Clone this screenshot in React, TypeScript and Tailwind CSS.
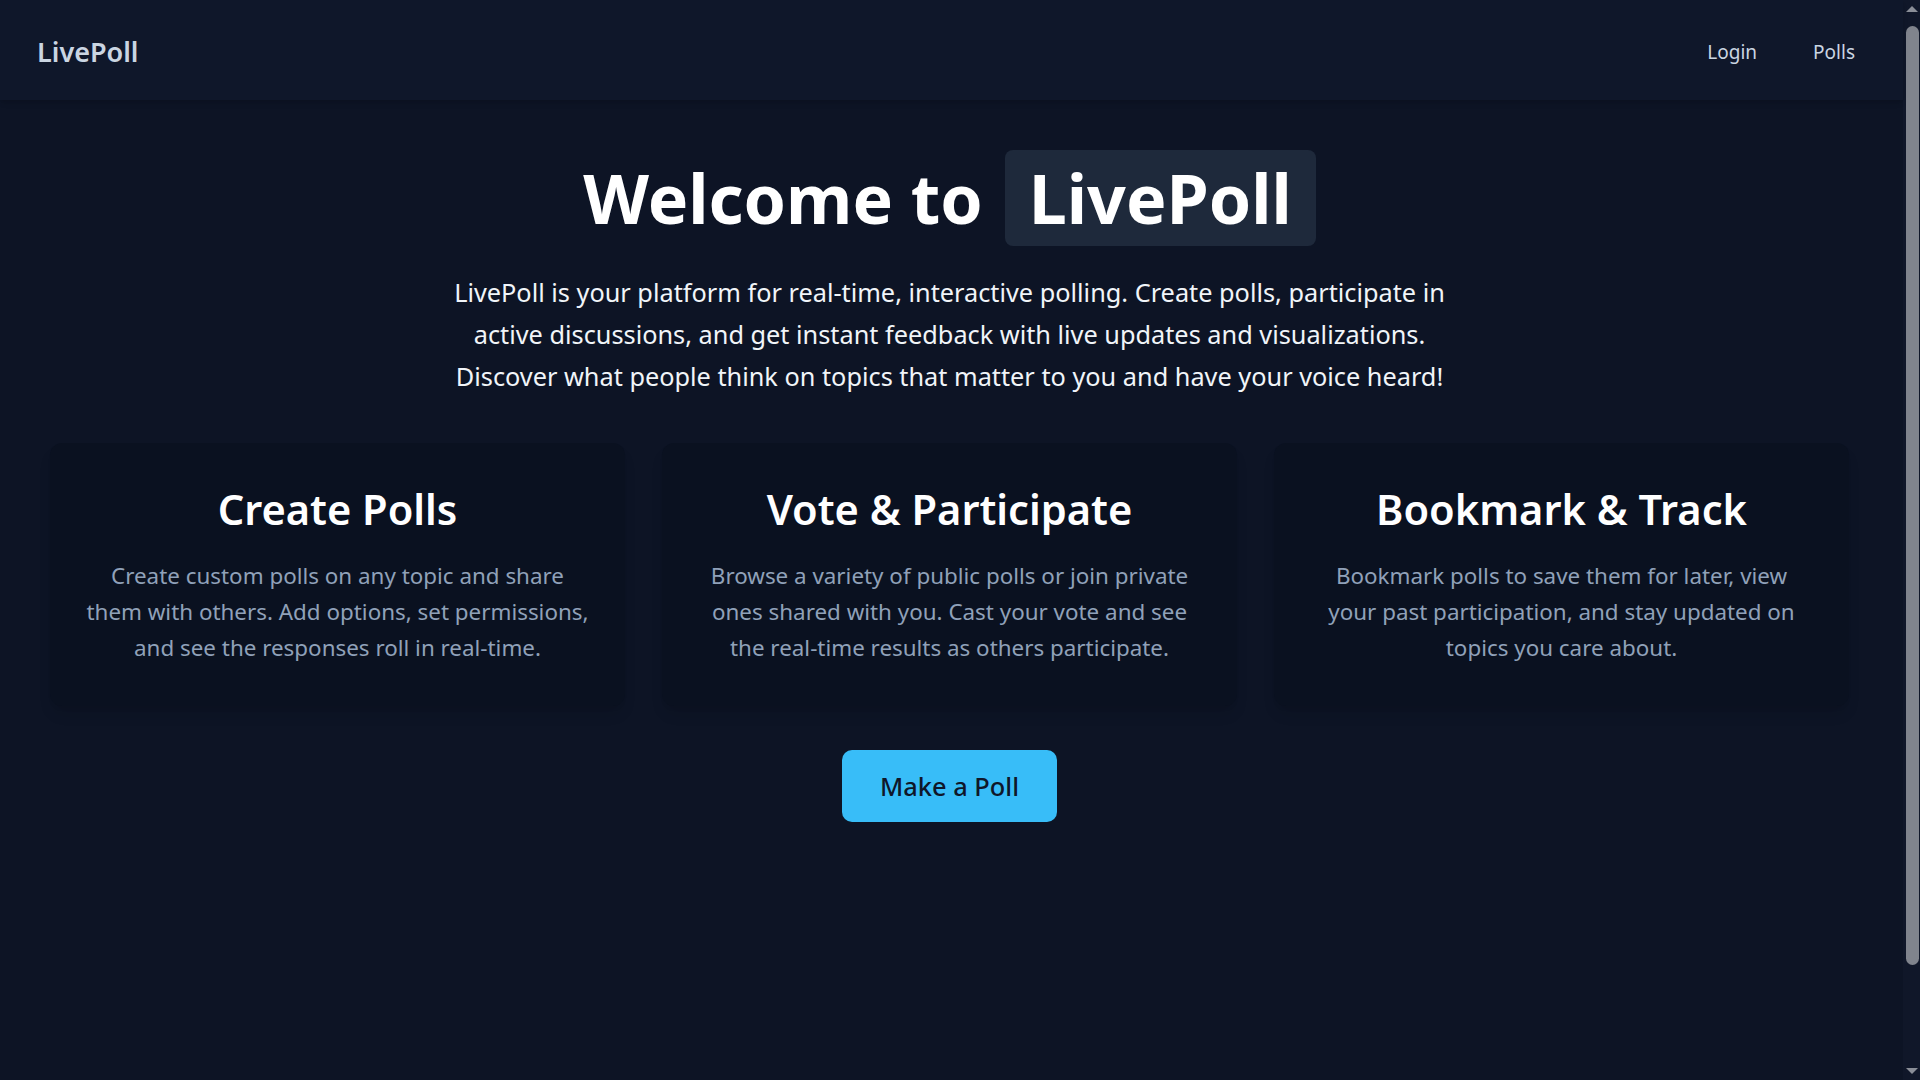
import React from "react";

const font = { fontFamily: '"Noto Sans", "Open Sans", Arial, sans-serif' };

const cards = [
  {
    title: "Create Polls",
    lines: [
      "Create custom polls on any topic and share",
      "them with others. Add options, set permissions,",
      "and see the responses roll in real-time.",
    ],
  },
  {
    title: "Vote & Participate",
    lines: [
      "Browse a variety of public polls or join private",
      "ones shared with you. Cast your vote and see",
      "the real-time results as others participate.",
    ],
  },
  {
    title: "Bookmark & Track",
    lines: [
      "Bookmark polls to save them for later, view",
      "your past participation, and stay updated on",
      "topics you care about.",
    ],
  },
];

function Scrollbar() {
  return (
    <div className="sticky top-0 flex h-screen w-[17px] shrink-0 flex-col items-center bg-[#101729] pl-[1px]">
      <div className="mt-[6px] h-0 w-0 border-x-[6px] border-b-[6px] border-x-transparent border-b-[#8a8e97]" />
      <div className="mt-[14px] h-[939px] w-[13px] rounded-full bg-[#80848d]" />
      <div className="flex-1" />
      <div className="mb-[6px] h-0 w-0 border-x-[6px] border-t-[6px] border-x-transparent border-t-[#8a8e97]" />
    </div>
  );
}

export default function App() {
  return (
    <div className="flex bg-[#0d1425]" style={font}>
      <div className="min-w-0 flex-1">
        <header className="relative z-10 flex h-[100px] items-center justify-between bg-[#0f172a] px-8 pt-1 shadow-md">
          <div className="pl-[5px] text-[27px] font-semibold text-slate-300">LivePoll</div>
          <nav className="flex items-center gap-6 text-[19px] text-slate-300">
            <a className="px-4">Login</a>
            <a className="px-4">Polls</a>
          </nav>
        </header>
        <main className="flex min-h-screen flex-col items-center pl-[50px] pr-[54px] pt-[50px]">
          <h1 className="flex items-center justify-center gap-[22px] text-[68px] font-bold leading-none text-white">
            <span>Welcome to</span>
            <span className="rounded-lg bg-[#1e293b] px-6 py-[14px]">LivePoll</span>
          </h1>
          <p className="mt-[25px] text-center text-[25.3px] leading-[42px] text-slate-100">
            LivePoll is your platform for real-time, interactive polling. Create polls, participate in
            <br />
            active discussions, and get instant feedback with live updates and visualizations.
            <br />
            Discover what people think on topics that matter to you and have your voice heard!
          </p>
          <div className="mt-[46px] grid w-full grid-cols-3 gap-[37px]">
            {cards.map((c) => (
              <div
                key={c.title}
                className="h-[263px] rounded-xl bg-[#0a1120] px-4 pt-[39px] text-center shadow-lg"
              >
                <h2 className="text-[41.6px] font-semibold leading-[54px] text-white">{c.title}</h2>
                <p className="mt-[22px] text-[22.4px] leading-9 text-slate-400">
                  {c.lines.map((l, i) => (
                    <React.Fragment key={i}>
                      {l}
                      {i < c.lines.length - 1 && <br />}
                    </React.Fragment>
                  ))}
                </p>
              </div>
            ))}
          </div>
          <button className="mt-[44px] flex h-[72px] items-center rounded-[10px] bg-[#38bdf8] px-[38px] text-[25.4px] font-medium text-[#0f172a]">
            Make a Poll
          </button>
        </main>
      </div>
      <Scrollbar />
    </div>
  );
}
